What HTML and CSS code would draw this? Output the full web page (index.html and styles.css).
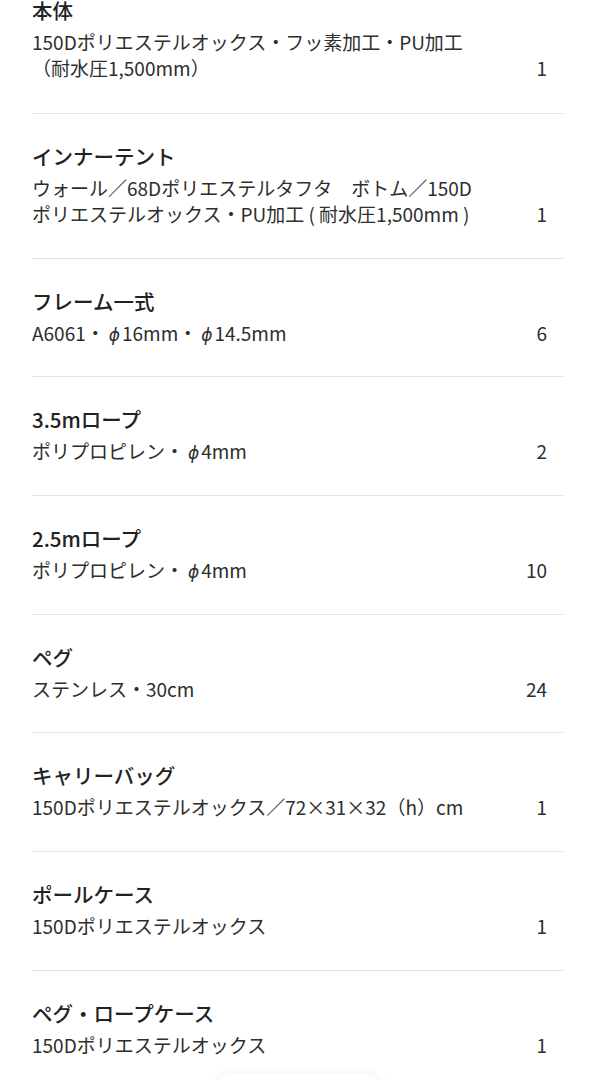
FILE: index.html
```html
<!DOCTYPE html>
<html lang="ja">
<head>
<meta charset="utf-8">
<title>付属品</title>
<link rel="stylesheet" href="styles.css">
</head>
<body>
<ul class="spec-list">
  <li class="spec-row first">
    <div class="spec-text">
      <div class="spec-name">本体</div>
      <div class="spec-desc">150Dポリエステルオックス・フッ素加工・PU加工<br>（耐水圧1,500mm）</div>
    </div>
    <div class="spec-qty">1</div>
  </li>
  <li class="spec-row">
    <div class="spec-text">
      <div class="spec-name">インナーテント</div>
      <div class="spec-desc">ウォール／68Dポリエステルタフタ　ボトム／150D<br>ポリエステルオックス・PU加工 ( 耐水圧1,500mm )</div>
    </div>
    <div class="spec-qty">1</div>
  </li>
  <li class="spec-row">
    <div class="spec-text">
      <div class="spec-name">フレーム一式</div>
      <div class="spec-desc">A6061・<i class="phi">ϕ</i>16mm・<i class="phi">ϕ</i>14.5mm</div>
    </div>
    <div class="spec-qty">6</div>
  </li>
  <li class="spec-row">
    <div class="spec-text">
      <div class="spec-name">3.5mロープ</div>
      <div class="spec-desc">ポリプロピレン・<i class="phi">ϕ</i>4mm</div>
    </div>
    <div class="spec-qty">2</div>
  </li>
  <li class="spec-row">
    <div class="spec-text">
      <div class="spec-name">2.5mロープ</div>
      <div class="spec-desc">ポリプロピレン・<i class="phi">ϕ</i>4mm</div>
    </div>
    <div class="spec-qty">10</div>
  </li>
  <li class="spec-row">
    <div class="spec-text">
      <div class="spec-name">ペグ</div>
      <div class="spec-desc">ステンレス・30cm</div>
    </div>
    <div class="spec-qty">24</div>
  </li>
  <li class="spec-row">
    <div class="spec-text">
      <div class="spec-name">キャリーバッグ</div>
      <div class="spec-desc">150Dポリエステルオックス／72×31×32（h）cm</div>
    </div>
    <div class="spec-qty">1</div>
  </li>
  <li class="spec-row">
    <div class="spec-text">
      <div class="spec-name">ポールケース</div>
      <div class="spec-desc">150Dポリエステルオックス</div>
    </div>
    <div class="spec-qty">1</div>
  </li>
  <li class="spec-row">
    <div class="spec-text">
      <div class="spec-name">ペグ・ロープケース</div>
      <div class="spec-desc">150Dポリエステルオックス</div>
    </div>
    <div class="spec-qty">1</div>
  </li>
</ul>
<div class="float-pill"></div>
</body>
</html>
```
FILE: styles.css
```css
html, body {
  margin: 0;
  padding: 0;
  background: #ffffff;
}
body {
  font-family: "Noto Sans CJK JP", "Noto Sans", sans-serif;
  color: #2e2e2e;
  overflow: hidden;
  height: 1080px;
}
.spec-list {
  list-style: none;
  margin: -5px 33px 0 32px;
  padding: 0;
}
.spec-row {
  display: flex;
  align-items: flex-end;
  justify-content: space-between;
  padding: 27px 16px 30.7px 0;
  border-bottom: 1px solid #e2e2e2;
}
.spec-row.first {
  padding-top: 0;
  padding-bottom: 32px;
}
.spec-text {
  display: flex;
  flex-direction: column;
  gap: 4px;
}
.spec-name {
  font-size: 20.5px;
  line-height: 30px;
  font-weight: 500;
  color: #222;
}
.spec-desc {
  font-size: 19px;
  line-height: 26px;
  font-weight: 400;
}
.phi {
  font-style: italic;
  font-family: "DejaVu Sans", sans-serif;
  font-size: 17px;
  line-height: 1;
  padding: 0 2px 0 4px;
}
.spec-qty {
  font-size: 19px;
  line-height: 26px;
}
.float-pill {
  position: fixed;
  left: 210px;
  top: 1074px;
  width: 176px;
  height: 50px;
  border-radius: 25px;
  background: #fff;
  box-shadow: 0 0 14px rgba(0, 0, 0, 0.06);
}
```
